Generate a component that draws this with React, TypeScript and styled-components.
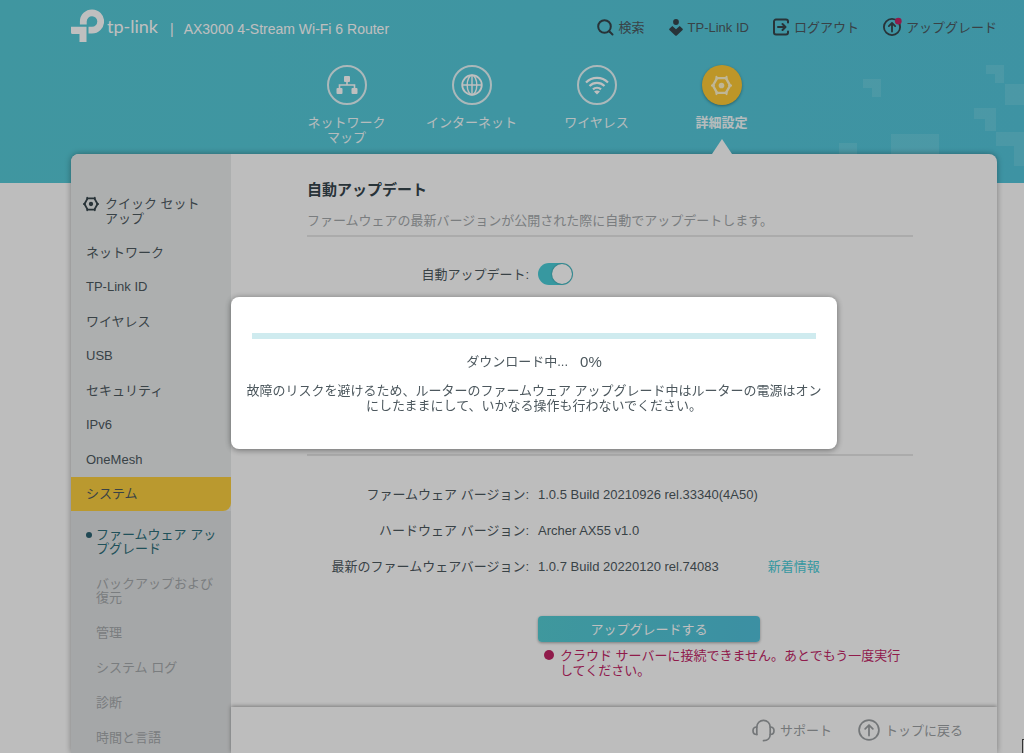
import React from 'react';
import styled, { createGlobalStyle, css } from 'styled-components';

const font = '"Liberation Sans", "Noto Sans CJK JP", sans-serif';
const ink = '#4d585e';
const iconInk = '#36444b';
const muted = '#9b9fa2';
const teal = '#4acbd6';
const danger = '#c02565';

const GlobalStyle = createGlobalStyle`
  *, *::before, *::after { box-sizing: border-box; }
  body {
    margin: 0;
    overflow: hidden;
    background: #fdfdfd;
    color: ${ink};
    font: 400 13px/15px ${font};
  }
  h1, h2, p, ul { margin: 0; padding: 0; }
  ul { list-style: none; }
  a { color: inherit; text-decoration: none; }
  button { font: inherit; cursor: pointer; }
`;

const Page = styled.div`
  position: relative;
  display: flex;
  flex-direction: column;
  height: 100vh;
  padding: 0 27px 0 71px;
  overflow: hidden;
`;

const Backdrop = styled.div`
  position: absolute;
  inset: 0 0 auto;
  height: 183px;
  z-index: -1;
  background: linear-gradient(100deg, #56c9d6, #53c5da);
`;

const Pattern = styled.svg`
  position: absolute;
  right: 0;
  top: 0;
`;

const TopBar = styled.header`
  display: flex;
  align-items: center;
  justify-content: space-between;
  height: 57px;
  flex: none;
  padding-bottom: 3px;
`;

const Brand = styled.div`
  display: flex;
  align-items: center;
  gap: 3px;
  padding-bottom: 3px;
  color: #fff;
`;

const BrandName = styled.span`
  font: 400 18px/24px Lato, sans-serif;
`;

const Model = styled.h1`
  display: flex;
  gap: 10px;
  padding: 6px 0 0 9px;
  font-size: 14px;
  line-height: 18px;
  font-weight: 400;
`;

const Tools = styled.nav`
  display: flex;
  align-items: center;
  gap: 24px;
`;

const ToolLink = styled.a`
  display: flex;
  align-items: center;
  gap: 5px;
`;

const MainNav = styled.nav`
  display: flex;
  justify-content: center;
  flex: none;
  height: 97px;
  padding-top: 8px;
`;

const NavItem = styled.a<{ $active?: boolean }>`
  position: relative;
  display: flex;
  flex-direction: column;
  align-items: center;
  gap: 10px;
  width: 125px;
  color: #f2fbfc;
  text-align: center;
  font-weight: ${p => (p.$active ? 700 : 400)};
  ${p => p.$active && css`
    &::after {
      content: '';
      position: absolute;
      bottom: 0;
      border: solid transparent;
      border-width: 0 10px 15px;
      border-bottom-color: #fdfdfd;
    }
  `}
`;

const NavCircle = styled.span<{ $active?: boolean }>`
  display: grid;
  place-items: center;
  width: 40px;
  height: 40px;
  border-radius: 50%;
  border: ${p => (p.$active ? 'none' : '2px solid #e4f6f8')};
  background: ${p => (p.$active ? '#fcc936' : 'none')};
  box-shadow: ${p => (p.$active ? '0 1px 3px rgba(0, 0, 0, 0.35)' : 'none')};
`;

const Panel = styled.div`
  display: flex;
  flex: 1;
  min-height: 0;
  border-radius: 8px 8px 0 0;
  overflow: hidden;
  background: #fdfdfd;
  box-shadow: 0 0 6px rgba(0, 0, 0, 0.35);
`;

const Sidebar = styled.aside`
  display: flex;
  flex-direction: column;
  width: 160px;
  flex: none;
  background: #e7eaea;
`;

const QuickSetup = styled.a`
  display: flex;
  gap: 6px;
  padding: 42px 24px 9px 12px;
`;

const SideList = styled.ul`
  display: grid;
  grid-auto-rows: 1fr;
  min-height: 276px;
`;

const SideLink = styled.a<{ $active?: boolean }>`
  display: flex;
  align-items: center;
  height: 100%;
  padding-left: 15px;
  background: ${p => (p.$active ? '#f8cc3f' : 'none')};
  border-radius: 0 0 8px 0;
`;

const SubList = styled.ul`
  display: flex;
  flex-direction: column;
  gap: 1px;
  flex: 1;
  padding-top: 7px;
  background: #dddfe0;
`;

const SubLink = styled.a<{ $active?: boolean }>`
  display: block;
  position: relative;
  padding: 10px 12px 10px 25px;
  line-height: 14px;
  color: ${p => (p.$active ? '#2b6d78' : '#a3a7aa')};
  ${p => p.$active && css`
    &::before {
      content: '';
      position: absolute;
      left: 15px;
      top: 14px;
      width: 6px;
      height: 6px;
      border-radius: 50%;
      background: #2b6170;
    }
  `}
`;

const Main = styled.main`
  display: flex;
  flex-direction: column;
  flex: 1;
  min-width: 0;
`;

const Content = styled.div`
  flex: 1;
  padding: 26px 84px 0 76px;
`;

const SectionHead = styled.div`
  padding-bottom: 7px;
  border-bottom: 2px solid #e4e4e4;
`;

const Title = styled.h2`
  color: ${iconInk};
  font-size: 15px;
  line-height: 20px;
  font-weight: 700;
`;

const Description = styled.p`
  margin-top: 13px;
  color: #a3a7aa;
`;

const Settings = styled.div`
  min-height: 219px;
  padding-top: 26px;
  border-bottom: 2px solid #e4e4e4;
`;

const Row = styled.div`
  display: grid;
  grid-template-columns: 222px 1fr;
  align-items: center;
  gap: 9px;
  min-height: 22px;
`;

const RowLabel = styled.span`
  text-align: right;
`;

const Toggle = styled.input`
  appearance: none;
  display: flex;
  justify-content: flex-end;
  width: 35px;
  height: 22px;
  margin: 0;
  border-radius: 11px;
  background: ${teal};
  &::after {
    content: '';
    width: 20px;
    height: 20px;
    margin: 1px;
    border-radius: 50%;
    background: #fff;
    box-shadow: 0 0 2px rgba(0, 0, 0, 0.4);
  }
`;

const Versions = styled.div`
  display: grid;
  gap: 14px;
  padding-top: 27px;
`;

const Value = styled.span`
  display: flex;
  gap: 49px;
`;

const NewsLink = styled.a`
  color: ${teal};
`;

const Action = styled.div`
  display: flex;
  flex-direction: column;
  align-items: flex-start;
  gap: 6px;
  padding: 39px 0 0 231px;
`;

const UpgradeButton = styled.button`
  width: 222px;
  height: 26px;
  padding: 0;
  border: 0;
  border-radius: 4px;
  background: linear-gradient(100deg, #54cbd2, #50c0da);
  box-shadow: 0 1px 3px rgba(0, 0, 0, 0.35);
  color: #fff;
`;

const ErrorText = styled.p`
  display: flex;
  gap: 6px;
  padding-left: 6px;
  width: 368px;
  color: ${danger};
  &::before {
    content: '';
    flex: none;
    width: 10px;
    height: 10px;
    margin-top: 2px;
    border-radius: 50%;
    background: ${danger};
  }
`;

const Footer = styled.footer`
  display: flex;
  justify-content: flex-end;
  align-items: center;
  gap: 26px;
  height: 46px;
  flex: none;
  padding-right: 34px;
  color: ${muted};
  box-shadow: 0 -1px 4px rgba(0, 0, 0, 0.35);
`;

const Overlay = styled.div`
  position: fixed;
  inset: 0;
  display: flex;
  align-items: center;
  justify-content: center;
  padding: 0 27px 7px 71px;
  background: rgba(0, 0, 0, 0.25);
`;

const Dialog = styled.div`
  width: 606px;
  padding: 36px 12px;
  border-radius: 8px;
  background: #fff;
  text-align: center;
  box-shadow: 0 1px 6px rgba(0, 0, 0, 0.45);
`;

const Bar = styled.progress`
  appearance: none;
  display: block;
  width: 564px;
  max-width: 100%;
  height: 6px;
  margin: 0 auto;
  border: 0;
  &::-webkit-progress-bar { background: #cfebef; }
  &::-webkit-progress-value { background: ${teal}; }
`;

const Status = styled.p`
  display: flex;
  justify-content: center;
  align-items: center;
  gap: 12px;
  margin: 15px 0 14px;
`;

const Percent = styled.span`
  font-size: 15px;
`;

const Corner = styled.span`
  position: fixed;
  right: 0;
  bottom: 0;
  width: 2px;
  height: 14px;
  border: solid #333;
  border-width: 1px 0 0 1px;
`;

const Gear = ({ size, color }: { size: number; color: string }) => (
  <svg width={size} height={size} viewBox="0 0 20 20" fill="none" stroke={color}>
    <path d="M5.800 3h8.400l4 7-4 7H5.800l-4-7z" strokeWidth="2.300" strokeLinejoin="round" />
    <circle cx="10" cy="10" r="2.700" fill={color} stroke="none" />
    <path d="M5.200 1.800v2M14.800 1.800v2M5.200 18.200v-2M14.800 18.200v-2M.8 10h2M19.200 10h-2" strokeWidth="2" strokeLinecap="round" />
  </svg>
);

const LogoMark = () => (
  <svg width="33" height="34" viewBox="0 0 33 34" fill="#fff">
    <path d="M12.300 15.500V12.300a8.700 8.700 0 1 1 8.700 8.900h-3.500" fill="none" stroke="#fff" strokeWidth="6.800" />
    <path d="M0 17.800h15.500V33H8.500v-8H1.500A1.500 1.500 0 0 1 0 23.500z" />
  </svg>
);

const SearchIcon = () => (
  <svg width="17" height="17" viewBox="0 0 17 17" fill="none" stroke={iconInk} strokeWidth="2" strokeLinecap="round">
    <circle cx="7.500" cy="7.500" r="6.300" /><path d="M12.500 12.500l3 3" />
  </svg>
);

const IdIcon = () => (
  <svg width="14" height="17" viewBox="0 0 14 17" fill={iconInk}>
    <circle cx="7" cy="3" r="2.900" />
    <path d="M3.300 7L7 10.200 10.700 7 13.600 9.800a1 1 0 0 1 0 1.200L7.800 16.500a1.200 1.200 0 0 1-1.600 0L.4 11a1 1 0 0 1 0-1.200z" />
  </svg>
);

const LogoutIcon = () => (
  <svg width="16" height="18" viewBox="0 0 16 18" fill="none" stroke={iconInk} strokeWidth="2" strokeLinecap="round" strokeLinejoin="round">
    <path d="M15 4.500V3.500a2 2 0 0 0-2-2H3a2 2 0 0 0-2 2v11a2 2 0 0 0 2 2h10a2 2 0 0 0 2-2v-1M5 9h7M9.500 6l3 3-3 3" />
  </svg>
);

const UpIcon = ({ size, dot }: { size: number; dot?: boolean }) => (
  <svg width={size} height={size} viewBox="0 0 20 20" fill="none" stroke={dot ? iconInk : muted} strokeWidth={dot ? 2 : 1.6} strokeLinecap="round" strokeLinejoin="round" overflow="visible">
    <circle cx="10" cy="10" r="9" />
    <path d="M10 15V6M6.500 9L10 5.500 13.500 9" />
    {dot && <circle cx="17" cy="3.500" r="3.700" fill={danger} stroke="none" />}
  </svg>
);

const MapIcon = () => (
  <svg width="22" height="20" viewBox="0 0 22 20" fill="#fff">
    <rect x="8" y="1" width="6" height="6" rx="1" />
    <rect x="0.500" y="13" width="6" height="6" rx="1" />
    <rect x="15.500" y="13" width="6" height="6" rx="1" />
    <path d="M11 6v4M3.500 14v-4h15v4" fill="none" stroke="#fff" strokeWidth="1.600" />
  </svg>
);

const GlobeIcon = () => (
  <svg width="22" height="22" viewBox="0 0 22 22" fill="none" stroke="#fff" strokeWidth="1.800">
    <circle cx="11" cy="11" r="9.800" /><ellipse cx="11" cy="11" rx="4.800" ry="9.800" strokeWidth="1.400" />
    <path d="M11 1v20M1 11h20" strokeWidth="1.400" />
  </svg>
);

const WifiIcon = () => (
  <svg width="24" height="20" viewBox="0 0 24 20" fill="none" stroke="#fff" strokeWidth="2.200">
    <path d="M1 7.500a15.500 15.500 0 0 1 22 0M4.500 11a10.600 10.600 0 0 1 15 0M8 14.400a5.700 5.700 0 0 1 8 0" />
    <path d="M9 16.500q3-2.200 6 0L12 19.500z" fill="#fff" stroke="none" />
  </svg>
);

const SupportIcon = () => (
  <svg width="23" height="23" viewBox="0 0 23 23" fill="none" stroke={muted} strokeWidth="1.700" strokeLinecap="round" strokeLinejoin="round">
    <path d="M4.800 15.500V8a6.700 6.700 0 0 1 13.400 0v7.500c0 3.500-2.400 6.200-6.700 6.200" />
    <path d="M4.800 8C2 8 1 9.500 1 11.800s1 3.700 3.800 3.700M18.200 8c2.800 0 3.800 1.500 3.800 3.800s-1 3.700-3.800 3.700" />
  </svg>
);

const navItems = [
  { label: <>ネットワーク<br />マップ</>, icon: <MapIcon /> },
  { label: 'インターネット', icon: <GlobeIcon /> },
  { label: 'ワイヤレス', icon: <WifiIcon /> },
  { label: '詳細設定', icon: <Gear size={21} color="#fff3c8" />, active: true },
];

const sideItems = ['ネットワーク', 'TP-Link ID', 'ワイヤレス', 'USB', 'セキュリティ', 'IPv6', 'OneMesh', 'システム'];
const subItems = ['ファームウェア アップグレード', 'バックアップおよび復元', '管理', 'システム ログ', '診断', '時間と言語'];

export default function App() {
  return (
    <>
      <GlobalStyle />
      <Page>
        <Backdrop>
          <Pattern width="224" height="183" viewBox="0 0 224 183" fill="#fff" fillOpacity="0.11">
            <path d="M63 79h18v18h-9v-9h-9zM186 65h18v18h-9v-9h-9zM205 84h19v21h-19zM174 108h22v23h-11v-12h-11zM196 132h28v34h-10v-20h-18zM91 134h48v20H91zM39 143h18v11H39z" />
          </Pattern>
        </Backdrop>
        <TopBar>
          <Brand>
            <LogoMark />
            <BrandName>tp-link</BrandName>
            <Model><span>|</span><span>AX3000 4-Stream Wi-Fi 6 Router</span></Model>
          </Brand>
          <Tools>
            <ToolLink href="#search"><SearchIcon />検索</ToolLink>
            <ToolLink href="#id"><IdIcon />TP-Link ID</ToolLink>
            <ToolLink href="#logout"><LogoutIcon />ログアウト</ToolLink>
            <ToolLink href="#upgrade"><UpIcon size={18} dot />アップグレード</ToolLink>
          </Tools>
        </TopBar>
        <MainNav>
          {navItems.map((item, i) => (
            <NavItem key={i} href="#nav" $active={item.active}>
              <NavCircle $active={item.active}>{item.icon}</NavCircle>
              <span>{item.label}</span>
            </NavItem>
          ))}
        </MainNav>
        <Panel>
          <Sidebar>
            <QuickSetup href="#quick"><Gear size={16} color={iconInk} /><span>クイック セット<br />アップ</span></QuickSetup>
            <SideList>
              {sideItems.map(item => (
                <li key={item}><SideLink href="#menu" $active={item === 'システム'}>{item}</SideLink></li>
              ))}
            </SideList>
            <SubList>
              {subItems.map((item, i) => (
                <li key={item}><SubLink href="#sub" $active={i === 0}>{item}</SubLink></li>
              ))}
            </SubList>
          </Sidebar>
          <Main>
            <Content>
              <SectionHead>
                <Title>自動アップデート</Title>
                <Description>ファームウェアの最新バージョンが公開された際に自動でアップデートします。</Description>
              </SectionHead>
              <Settings>
                <Row>
                  <RowLabel as="label" htmlFor="auto-update">自動アップデート:</RowLabel>
                  <Toggle id="auto-update" type="checkbox" role="switch" defaultChecked />
                </Row>
              </Settings>
              <Versions>
                <Row><RowLabel>ファームウェア バージョン:</RowLabel><Value>1.0.5 Build 20210926 rel.33340(4A50)</Value></Row>
                <Row><RowLabel>ハードウェア バージョン:</RowLabel><Value>Archer AX55 v1.0</Value></Row>
                <Row>
                  <RowLabel>最新のファームウェアバージョン:</RowLabel>
                  <Value>1.0.7 Build 20220120 rel.74083<NewsLink href="#news">新着情報</NewsLink></Value>
                </Row>
              </Versions>
              <Action>
                <UpgradeButton type="button">アップグレードする</UpgradeButton>
                <ErrorText><span>クラウド サーバーに接続できません。あとでもう一度実行してください。</span></ErrorText>
              </Action>
            </Content>
            <Footer>
              <ToolLink href="#support"><SupportIcon />サポート</ToolLink>
              <ToolLink href="#top"><UpIcon size={22} />トップに戻る</ToolLink>
            </Footer>
          </Main>
        </Panel>
      </Page>
      <Overlay>
        <Dialog role="dialog" aria-modal="true" aria-labelledby="download-status">
          <Bar value={0} max={100} aria-labelledby="download-status" />
          <Status id="download-status"><span>ダウンロード中...</span><Percent>0%</Percent></Status>
          <p>故障のリスクを避けるため、ルーターのファームウェア アップグレード中はルーターの電源はオンにしたままにして、いかなる操作も行わないでください。</p>
        </Dialog>
      </Overlay>
      <Corner />
    </>
  );
}
